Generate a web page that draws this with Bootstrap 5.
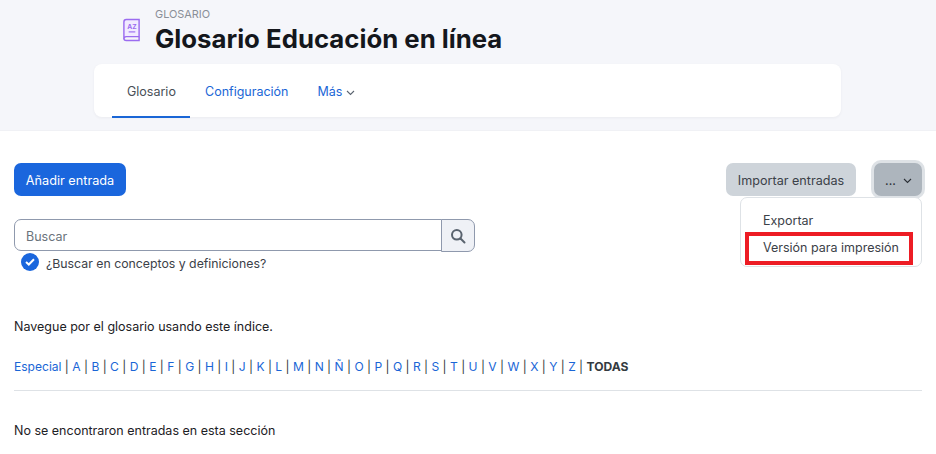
<!DOCTYPE html>
<html lang="es">
<head>
<meta charset="UTF-8">
<title>Glosario Educación en línea</title>
<link rel="stylesheet" href="https://cdn.jsdelivr.net/npm/bootstrap@5.3.0/dist/css/bootstrap.min.css">
<style>
  body { font-family: Inter, "Liberation Sans", sans-serif; font-size: 12.5px; color: #1d2125; background: #fff; height: 454px; overflow: hidden; }
  a { text-decoration: none; color: #0f6cbf; }
  .head-band { background: #f5f6fa; height: 131px; padding: 7px 95px 0 94px; box-shadow: inset 0 -1px 0 #f0f1f5; }
  .head-row { padding-left: 28px; height: 57px; }
  .head-icon { width: 19px; height: 24px; margin-right: 14px; margin-top: 11px; }
  .head-kicker { font-size: 10.9px; line-height: 14px; color: #8a8f98; }
  .head-title { font-size: 25.75px; font-weight: 700; line-height: 32px; margin: 2px 0 0; color: #14171c; }
  .tab-card { background: #fff; border-radius: 8px; height: 53px; box-shadow: 0 1px 3px rgba(30,40,60,.05); padding-left: 18px; }
  .tab-link { padding: 0 15px; height: 54px; line-height: 56px; color: #1a66d6; display: block; white-space: nowrap; }
  .tab-on { color: #495057; border-bottom: 2px solid #1a66d6; width: 78px; }
  .tab-gap { margin-left: -1px; }
  .body-area { padding: 32px 14px 0; }
  .btn-add { background: #1a66dd; color: #fff; border: 0; border-radius: 7px; font-size: 12.7px; height: 33px; width: 112px; padding: 3px 0 0; }
  .btn-import { background: #ced4da; color: #3b4148; border: 0; border-radius: 7px; font-size: 12.6px; height: 33px; width: 130px; padding: 3px 0 0; }
  .btn-more { background: #adb5bd; color: #2b3036; border: 0; border-radius: 7px; font-size: 12.5px; height: 33px; width: 48px; box-shadow: 0 0 0 3px #dee2e6; margin-left: 18px; display: flex; align-items: center; justify-content: center; gap: 7px; padding: 3px 0 0 1px; }
  .more-wrap { position: relative; }
  .more-menu { position: absolute; right: 0; top: 34px; width: 182px; height: 70px; background: #fff; border: 1px solid #dee2e6; border-radius: 7px; padding: 9px 4px 0; z-index: 5; }
  .more-item { display: block; color: #3b4148; padding: 0 0 0 18px; line-height: 28px; height: 25px; white-space: nowrap; }
  .more-hit { outline: 4px solid #ed1c24; outline-offset: -4px; height: 33px; line-height: 31px; width: 168px; }
  .search-box { width: 461px; height: 32px; margin-top: 23px; }
  .search-input { flex: 1; border: 1px solid #8f99ad; border-radius: 7px 0 0 7px; font-size: 12.5px; padding: 2px 11px 0; height: 32px; color: #6a737b; }
  .search-input::placeholder { color: #6a737b; opacity: 1; }
  .search-btn { width: 34px; height: 33px; border: 1px solid #8f99ad; border-radius: 0 7px 7px 0; background: #eff1f6; margin-left: -1px; display: flex; align-items: center; justify-content: center; padding: 0; }
  .check-row { padding-left: 7px; height: 18px; margin-top: 2px; line-height: 22px; color: #3b4148; font-size: 12.3px; }
  .check-dot { width: 18px; height: 18px; border-radius: 50%; background: #1a66dd; margin-right: 7px; display: flex; align-items: center; justify-content: center; }
  .hint-line { margin: 46px 0 0; line-height: 20px; }
  .alpha-line { margin: 20px 0 0; line-height: 20px; color: #343a40; white-space: nowrap; font-size: 12.06px; }
  .alpha-line a { color: #1a66d6; }
  .rule-line { border: 0; border-top: 1px solid #dee2e6; opacity: 1; margin: 13px 0 0; }
  .nores-line { margin: 30px 0 0; line-height: 20px; }
</style>
</head>
<body>
<div class="head-band">
  <div class="head-row d-flex">
    <svg class="head-icon" viewBox="0 0 20 24" fill="none" stroke="#9b6cf0" stroke-width="1.5">
      <path d="M2 3.500C2 2 3 1 4.500 1H18V19H4.500C3 19 2 20 2 21.500Z" fill="#f1ebff"/>
      <path d="M2 21C2 22.500 3 23 4.500 23H18V19"/>
      <path d="M7 14H14" stroke-width="1.200"/>
      <text x="10.500" y="11" font-family="Inter, sans-serif" font-size="7" font-weight="700" fill="#9b6cf0" stroke="none" text-anchor="middle">AZ</text>
    </svg>
    <div>
      <div class="head-kicker">GLOSARIO</div>
      <h1 class="head-title">Glosario Educación en línea</h1>
    </div>
  </div>
  <div class="tab-card d-flex">
    <a class="tab-link tab-on" href="#">Glosario</a>
    <a class="tab-link" href="#">Configuración</a>
    <a class="tab-link tab-gap" href="#">Más
      <svg width="9" height="6" viewBox="0 0 9 6" fill="none" stroke="#5b6470" stroke-width="1.100"><path d="M1 1L4.500 4.500L8 1"/></svg>
    </a>
  </div>
</div>
<div class="body-area">
  <div class="d-flex justify-content-between">
    <button class="btn-add">Añadir entrada</button>
    <div class="d-flex">
      <button class="btn-import">Importar entradas</button>
      <div class="more-wrap">
        <button class="btn-more"><span>...</span>
          <svg width="9" height="6" viewBox="0 0 9 6" fill="none" stroke="#2b3036" stroke-width="1.100"><path d="M1 1L4.500 4.500L8 1"/></svg>
        </button>
        <div class="more-menu">
          <a class="more-item" href="#">Exportar</a>
          <a class="more-item more-hit" href="#">Versión para impresión</a>
        </div>
      </div>
    </div>
  </div>
  <div class="search-box d-flex">
    <input class="search-input" type="text" placeholder="Buscar">
    <button class="search-btn" type="button" aria-label="Buscar">
      <svg width="16" height="16" viewBox="0 0 16 16" fill="none" stroke="#59636e" stroke-width="2"><circle cx="6.800" cy="6.800" r="4.800"/><path d="M10.500 10.500L14.500 14.500" stroke-linecap="round"/></svg>
    </button>
  </div>
  <div class="check-row d-flex">
    <span class="check-dot">
      <svg width="10" height="8" viewBox="0 0 10 8" fill="none" stroke="#fff" stroke-width="2"><path d="M1 4L3.800 6.500L9 1.200"/></svg>
    </span>
    ¿Buscar en conceptos y definiciones?
  </div>
  <p class="hint-line">Navegue por el glosario usando este índice.</p>
  <p class="alpha-line"><a href="#">Especial</a> | <a href="#">A</a> | <a href="#">B</a> | <a href="#">C</a> | <a href="#">D</a> | <a href="#">E</a> | <a href="#">F</a> | <a href="#">G</a> | <a href="#">H</a> | <a href="#">I</a> | <a href="#">J</a> | <a href="#">K</a> | <a href="#">L</a> | <a href="#">M</a> | <a href="#">N</a> | <a href="#">Ñ</a> | <a href="#">O</a> | <a href="#">P</a> | <a href="#">Q</a> | <a href="#">R</a> | <a href="#">S</a> | <a href="#">T</a> | <a href="#">U</a> | <a href="#">V</a> | <a href="#">W</a> | <a href="#">X</a> | <a href="#">Y</a> | <a href="#">Z</a> | <b>TODAS</b></p>
  <hr class="rule-line">
  <p class="nores-line">No se encontraron entradas en esta sección</p>
</div>
<script src="https://cdn.jsdelivr.net/npm/bootstrap@5.3.0/dist/js/bootstrap.bundle.min.js"></script>
</body>
</html>
